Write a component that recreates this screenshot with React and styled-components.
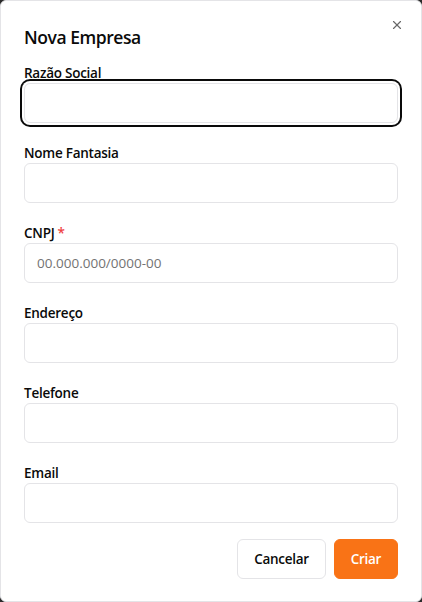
import React from 'react'
import styled, { createGlobalStyle } from 'styled-components'

const GlobalStyle = createGlobalStyle`
  * { box-sizing: border-box; }
  html, body {
    margin: 0;
    padding: 0;
    background: #2b2b2b;
    font-family: "Open Sans", "Noto Sans", sans-serif;
  }
`

const Dialog = styled.div`
  position: relative;
  width: 422px;
  height: 602px;
  background: #fff;
  border: 1px solid #e4e4e7;
  border-radius: 6px;
  padding: 23px 23px;
  display: flex;
  flex-direction: column;
  color: #0a0a0a;
`

const Title = styled.h2`
  margin: 1px 0 0;
  font-size: 17.5px;
  font-weight: 600;
  line-height: 24px;
  letter-spacing: -0.45px;
`

const CloseButton = styled.button`
  position: absolute;
  top: 16px;
  right: 16px;
  width: 16px;
  height: 16px;
  padding: 0;
  border: none;
  background: transparent;
  color: #444;
  opacity: 0.8;
  display: flex;
  align-items: center;
  justify-content: center;
  cursor: pointer;
`

const Form = styled.form`
  display: flex;
  flex-direction: column;
`

const Fields = styled.div`
  display: flex;
  flex-direction: column;
  gap: 20px;
  margin-top: 14px;
`

const Field = styled.div`
  display: flex;
  flex-direction: column;
`

const Label = styled.label`
  font-size: 13.5px;
  font-weight: 600;
  line-height: 20px;
  letter-spacing: -0.25px;
`

const Required = styled.span`
  color: #ef4444;
  margin-left: 3px;
`

const Input = styled.input`
  height: 40px;
  width: 100%;
  border: 1px solid #e4e4e7;
  border-radius: 6px;
  padding: 0 12px;
  font-family: inherit;
  font-size: 13.5px;
  color: #0a0a0a;
  background: #fff;
  outline: none;
  box-shadow: ${p => (p.$focused ? '0 0 0 2px #fff, 0 0 0 4px #0a0a0a' : 'none')};
  &::placeholder {
    color: #737373;
  }
`

const Actions = styled.div`
  display: flex;
  justify-content: flex-end;
  gap: 8px;
  margin-top: 16px;
`

const Button = styled.button`
  height: 40px;
  padding: 0 16px;
  border-radius: 6px;
  font-family: inherit;
  font-size: 13.5px;
  font-weight: 600;
  letter-spacing: -0.3px;
  cursor: pointer;
  border: 1px solid ${p => (p.$primary ? '#f97316' : '#e4e4e7')};
  background: ${p => (p.$primary ? '#f97316' : '#fff')};
  color: ${p => (p.$primary ? '#fff' : '#0a0a0a')};
`

const fields = [
  { label: 'Razão Social', focused: true },
  { label: 'Nome Fantasia' },
  { label: 'CNPJ', required: true, placeholder: '00.000.000/0000-00' },
  { label: 'Endereço' },
  { label: 'Telefone' },
  { label: 'Email' },
]

const App = () => {
  return (
    <>
      <GlobalStyle />
      <Dialog>
        <Title>Nova Empresa</Title>
        <CloseButton aria-label="Fechar">
          <svg width="14" height="14" viewBox="0 0 24 24" fill="none" stroke="currentColor" strokeWidth="2" strokeLinecap="round">
            <path d="M18 6 6 18" />
            <path d="m6 6 12 12" />
          </svg>
        </CloseButton>
        <Form onSubmit={e => e.preventDefault()}>
          <Fields>
            {fields.map(f => (
              <Field key={f.label}>
                <Label>
                  {f.label}
                  {f.required && <Required>*</Required>}
                </Label>
                <Input $focused={f.focused} placeholder={f.placeholder} />
              </Field>
            ))}
          </Fields>
          <Actions>
            <Button type="button">Cancelar</Button>
            <Button type="submit" $primary>Criar</Button>
          </Actions>
        </Form>
      </Dialog>
    </>
  )
}

export default App
